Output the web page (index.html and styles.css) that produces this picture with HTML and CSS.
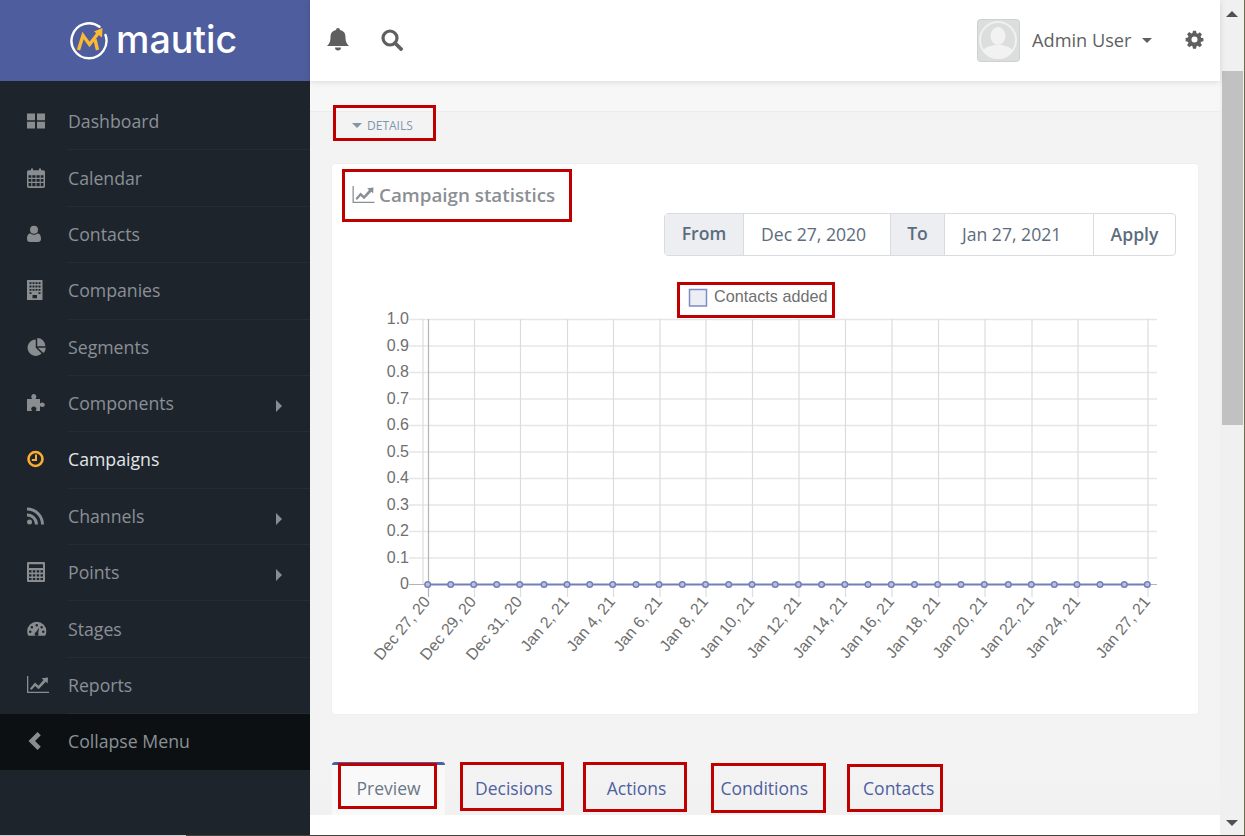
FILE: index.html
```html
<!DOCTYPE html>
<html lang="en">
<head>
    <meta charset="UTF-8">
    <meta name="viewport" content="width=device-width, initial-scale=1.0">
    <title>Mautic</title>
    <link rel="stylesheet" href="styles.css">
</head>
<body>
<div class="app">
    <aside class="sidebar">
        <div class="brand">
            <svg class="brand-mark" width="40" height="40" viewBox="0 0 40 40">
                <path d="M30.500 5.800A17.500 17.500 0 1 0 36.500 14" fill="none" stroke="#fff" stroke-width="2.400" stroke-linecap="round"/>
                <path d="M9.500 29L14 14.500L20.500 23.500L29 12.500" fill="none" stroke="#fdb933" stroke-width="3.400"/>
                <path d="M25 10.500L33.500 7L33 16.500Z" fill="#fdb933"/>
                <path d="M26 18.500L28.500 29" fill="none" stroke="#fdb933" stroke-width="3.400"/>
            </svg>
            <span class="brand-name">mautic</span>
        </div>
        <ul class="menu">
            <li class="menu-item">
                <svg class="menu-icon" viewBox="0 0 18 18"><path d="M0 1.500h8v6.700H0zM10 1.500h8v6.700h-8zM0 9.800h8v6.700H0zM10 9.800h8v6.700h-8z"/></svg>
                <span>Dashboard</span>
            </li>
            <li class="menu-item">
                <svg class="menu-icon icon-tall" viewBox="0 0 18 18" preserveAspectRatio="none"><path fill-rule="evenodd" d="M1.500 2H4V0.500h2V2h6V0.500h2V2h2.500A1.500 1.500 0 0 1 18 3.500v13a1.500 1.500 0 0 1-1.500 1.500h-15A1.500 1.500 0 0 1 0 16.500v-13A1.500 1.500 0 0 1 1.500 2zM1.500 6.500v2.300h2.800V6.500zM5.300 6.500v2.300h3.200V6.500zM9.500 6.500v2.300h3.200V6.500zM13.700 6.500v2.300h2.800V6.500zM1.500 9.800v2.600h2.800V9.800zM5.300 9.800v2.600h3.200V9.800zM9.500 9.800v2.600h3.200V9.800zM13.700 9.800v2.600h2.800V9.800zM1.500 13.400v3h2.800v-3zM5.300 13.400v3h3.200v-3zM9.500 13.400v3h3.200v-3zM13.700 13.400v3h2.800v-3z"/></svg>
                <span>Calendar</span>
            </li>
            <li class="menu-item">
                <svg class="menu-icon" viewBox="0 0 18 18"><circle cx="7" cy="4.800" r="4"/><path d="M0 14c0-4 1.500-5.500 3.500-5.500 1 .8 2.200 1.200 3.500 1.200s2.500-.4 3.500-1.200c2 0 3.500 1.500 3.500 5.500 0 2-1.200 3-3 3H3c-1.800 0-3-1-3-3z"/></svg>
                <span>Contacts</span>
            </li>
            <li class="menu-item">
                <svg class="menu-icon icon-tall" viewBox="0 0 18 18" preserveAspectRatio="none"><path fill-rule="evenodd" d="M0 0h15.500v18H0zM2.500 2v1.700h2V2zM5.500 2v1.700h2V2zM8.500 2v1.700h2V2zM11.500 2v1.700h2V2zM2.500 5v1.700h2V5zM5.500 5v1.700h2V5zM8.500 5v1.700h2V5zM11.500 5v1.700h2V5zM2.500 8v1.700h2V8zM5.500 8v1.700h2V8zM8.500 8v1.700h2V8zM11.500 8v1.700h2V8zM2.500 11v1.700h2V11zM11.500 11v1.700h2V11zM5.500 16.500h4.500v-3H5.500z"/></svg>
                <span>Companies</span>
            </li>
            <li class="menu-item">
                <svg class="menu-icon icon-round" viewBox="0 0 18 18"><path d="M8 1.500v8.200l5.800 5.800A8.200 8.200 0 1 1 8 1.500z"/><path d="M9.500 0a8.200 8.200 0 0 1 8.200 8.200H9.500z"/><path d="M10 9.700h8a8 8 0 0 1-2.300 5.400z"/></svg>
                <span>Segments</span>
            </li>
            <li class="menu-item">
                <svg class="menu-icon" viewBox="0 0 18 18"><path d="M0 5h5.300c-.6-.8-1-1.300-1-2.300C4.300 1.200 5.300 0 6.800 0s2.500 1.200 2.500 2.700c0 1-.4 1.500-1 2.300H13v4.500c.8-.6 1.300-1 2.200-1 1.500 0 2.600 1 2.600 2.300s-1.100 2.300-2.600 2.300c-.9 0-1.400-.4-2.200-1V17H8.500c.5-.8.900-1.300.9-2.200 0-1.300-1.100-2.300-2.600-2.300s-2.600 1-2.600 2.300c0 .9.400 1.400.9 2.200H0z"/></svg>
                <span>Components</span>
                <i class="menu-arrow"></i>
            </li>
            <li class="menu-item is-active">
                <svg class="menu-icon" viewBox="0 0 18 18"><circle cx="8.500" cy="9" r="7" fill="none" stroke="#fbad2f" stroke-width="2.600"/><path d="M9 4.500v5.500H4.800" fill="none" stroke="#fbad2f" stroke-width="2"/></svg>
                <span>Campaigns</span>
            </li>
            <li class="menu-item">
                <svg class="menu-icon" viewBox="0 0 18 18"><circle cx="2.500" cy="15" r="2.500"/><path d="M0 6.500a11 11 0 0 1 11 11H8a8 8 0 0 0-8-8zM0 .5a17 17 0 0 1 17 17h-3A14 14 0 0 0 0 3.500z"/></svg>
                <span>Channels</span>
                <i class="menu-arrow"></i>
            </li>
            <li class="menu-item">
                <svg class="menu-icon icon-tall" viewBox="0 0 18 18" preserveAspectRatio="none"><path fill-rule="evenodd" d="M1 0h16a1 1 0 0 1 1 1v16a1 1 0 0 1-1 1H1a1 1 0 0 1-1-1V1a1 1 0 0 1 1-1zM2 2v3.500h14V2zM2 7.500v2h2.500v-2zM5.800 7.500v2h2.500v-2zM9.700 7.500v2h2.500v-2zM13.500 7.500v2H16v-2zM2 11v2h2.500v-2zM5.800 11v2h2.500v-2zM9.700 11v2h2.500v-2zM13.500 11v2H16v-2zM2 14.300v2h2.500v-2zM5.800 14.300v2h2.500v-2zM9.700 14.300v2h2.500v-2zM13.500 14.300v2H16v-2z"/></svg>
                <span>Points</span>
                <i class="menu-arrow"></i>
            </li>
            <li class="menu-item">
                <svg class="menu-icon icon-round" viewBox="0 0 20 18"><path fill-rule="evenodd" d="M10 1.500a9.800 9.800 0 0 1 9.800 9.800c0 1.700-.4 3.300-1.200 4.700H1.400A9.800 9.800 0 0 1 .2 11.300 9.800 9.800 0 0 1 10 1.500zM10 3.800a1.300 1.300 0 1 0 0 2.600 1.300 1.300 0 0 0 0-2.600zM5 6a1.300 1.300 0 1 0 0 2.600A1.300 1.300 0 0 0 5 6zM15 6a1.300 1.300 0 1 0 0 2.600A1.300 1.300 0 0 0 15 6zM3.300 10.500a1.300 1.300 0 1 0 0 2.600 1.300 1.300 0 0 0 0-2.600zM16.700 10.500a1.300 1.300 0 1 0 0 2.600 1.300 1.300 0 0 0 0-2.600zM12.500 7.500l-3.200 4.700a2 2 0 1 0 2.200.8z"/></svg>
                <span>Stages</span>
            </li>
            <li class="menu-item menu-item-wide">
                <svg class="menu-icon" viewBox="0 0 22 18"><path d="M0 0h1.300v15.800H22V17H0z"/><path d="M3 12.500l5-6 3.500 3.300 5-5.800-1.900-1.700L21 1.500l-.3 6-1.900-1.700-7.200 7.500-3.500-3.300-3.600 4z"/></svg>
                <span>Reports</span>
            </li>
            <li class="menu-item menu-collapse">
                <svg class="menu-icon" viewBox="0 0 18 18"><path d="M10.500 0l3.300 3.300-5.700 5.700 5.700 5.700-3.300 3.300-9-9z"/></svg>
                <span>Collapse Menu</span>
            </li>
        </ul>
    </aside>

    <div class="main">
        <header class="topbar">
            <svg class="top-icon" width="22" height="23" viewBox="0 0 22 23"><path d="M11 0a2 2 0 0 1 2 2c4 .8 5.500 3.500 5.500 7.500 0 4 1 6 3.500 8.500H0c2.500-2.500 3.500-4.500 3.500-8.500S5 2.800 9 2a2 2 0 0 1 2-2zM8 19.500h6a3 3 0 0 1-6 0z"/></svg>
            <svg class="top-icon top-search" width="22" height="22" viewBox="0 0 22 22"><circle cx="9" cy="9" r="7" fill="none" stroke="#5f5f5f" stroke-width="3.200"/><path d="M14 14l6 6" stroke="#5f5f5f" stroke-width="3.800" stroke-linecap="round"/></svg>
            <div class="top-user">
                <svg class="avatar" width="43" height="43" viewBox="0 0 43 43">
                    <rect x=".5" y=".5" width="42" height="42" rx="3" fill="#dcdddd" stroke="#cfd0d0"/>
                    <circle cx="21" cy="21" r="18" fill="none" stroke="#f0f0f0" stroke-width="2"/>
                    <ellipse cx="21" cy="17" rx="7.500" ry="9" fill="#f2f2f2"/>
                    <path d="M6 32c3-5 9-5 11-6h8c2 1 8 1 11 6a18 18 0 0 1-30 0z" fill="#f2f2f2"/>
                </svg>
                <span class="user-name">Admin User</span>
                <i class="user-caret"></i>
                <svg class="gear" width="19" height="19" viewBox="0 0 20 20"><path fill="#5f5f5f" fill-rule="evenodd" d="M8.200 0h3.600l.5 2.700 1.500.6 2.300-1.600 2.500 2.500-1.600 2.300.6 1.500 2.700.5v3.600l-2.700.5-.6 1.500 1.600 2.300-2.500 2.500-2.300-1.600-1.500.6-.5 2.700H8.200l-.5-2.700-1.500-.6-2.300 1.600-2.500-2.500 1.600-2.300-.6-1.500-2.700-.5V8.200l2.700-.5.6-1.500-1.600-2.300 2.500-2.500 2.300 1.600 1.500-.6zM10 6.500a3.500 3.500 0 1 0 0 7 3.500 3.500 0 0 0 0-7z" transform="scale(.91) translate(1 1)"/></svg>
            </div>
        </header>

        <div class="content">
            <div class="details-bar">
                <a class="details-toggle"><i class="details-caret"></i>DETAILS</a>
            </div>

            <section class="card">
                <h3 class="card-title">
                    <svg width="23" height="18" viewBox="0 0 22 18"><path d="M0 0h1.300v15.800H22V17H0z"/><path d="M3 12.500l5-6 3.500 3.300 5-5.800-1.900-1.700L21 1.500l-.3 6-1.900-1.700-7.200 7.500-3.500-3.300-3.600 4z"/></svg>
                    Campaign statistics
                </h3>
                <div class="date-row">
                    <div class="date-group">
                        <span class="date-addon date-from">From</span>
                        <span class="date-input date-input-from">Dec 27, 2020</span>
                        <span class="date-addon date-to">To</span>
                        <span class="date-input date-input-to">Jan 27, 2021</span>
                        <span class="date-apply">Apply</span>
                    </div>
                </div>
                <svg class="chart" width="865" height="415" viewBox="332 270 865 415">
                    <rect x="689.500" y="289.500" width="17" height="16.500" fill="#eceef6" stroke="#7f8cc0" stroke-width="1.500"/>
                    <text class="legend-label" x="714" y="301.500">Contacts added</text>

                    <g class="grid-h">
                        <path d="M409 319.500H1157M409 346H1157M409 372.500H1157M409 399H1157M409 425.500H1157M409 452H1157M409 478.500H1157M409 505H1157M409 531.500H1157M409 558H1157"/>
                    </g>
                    <g class="grid-v">
                        <path d="M423 319V584M474.500 319V597M520.500 319V597M567.500 319V597M613.500 319V597M660 319V597M706 319V597M752.500 319V597M799 319V597M845.500 319V597M892 319V597M938.500 319V597M985 319V597M1032 319V597M1078 319V597M1148 319V597"/>
                    </g>
                    <path class="axis" d="M428.500 319V597M409 584.500H1157"/>
                    <path class="series-line" d="M427.700 584.500H1147.300"/>
                    <g class="series-points">
                        <circle cx="427.700" cy="584.500" r="2.800"/><circle cx="450.700" cy="584.500" r="2.800"/><circle cx="473.700" cy="584.500" r="2.800"/><circle cx="496.700" cy="584.500" r="2.800"/><circle cx="519.700" cy="584.500" r="2.800"/><circle cx="544" cy="584.500" r="2.800"/><circle cx="567" cy="584.500" r="2.800"/><circle cx="589.700" cy="584.500" r="2.800"/><circle cx="612.700" cy="584.500" r="2.800"/><circle cx="636" cy="584.500" r="2.800"/><circle cx="659" cy="584.500" r="2.800"/><circle cx="682.300" cy="584.500" r="2.800"/><circle cx="705.500" cy="584.500" r="2.800"/><circle cx="728.700" cy="584.500" r="2.800"/><circle cx="752" cy="584.500" r="2.800"/><circle cx="775.200" cy="584.500" r="2.800"/><circle cx="798.400" cy="584.500" r="2.800"/><circle cx="821.600" cy="584.500" r="2.800"/><circle cx="844.800" cy="584.500" r="2.800"/><circle cx="868" cy="584.500" r="2.800"/><circle cx="891.300" cy="584.500" r="2.800"/><circle cx="914.500" cy="584.500" r="2.800"/><circle cx="937.700" cy="584.500" r="2.800"/><circle cx="961" cy="584.500" r="2.800"/><circle cx="984.300" cy="584.500" r="2.800"/><circle cx="1008.300" cy="584.500" r="2.800"/><circle cx="1031.300" cy="584.500" r="2.800"/><circle cx="1054.300" cy="584.500" r="2.800"/><circle cx="1077" cy="584.500" r="2.800"/><circle cx="1100" cy="584.500" r="2.800"/><circle cx="1124.300" cy="584.500" r="2.800"/><circle cx="1147.300" cy="584.500" r="2.800"/>
                    </g>
                    <g class="y-labels">
                        <text x="409" y="324">1.0</text>
                        <text x="409" y="351">0.9</text>
                        <text x="409" y="377">0.8</text>
                        <text x="409" y="404">0.7</text>
                        <text x="409" y="430">0.6</text>
                        <text x="409" y="457">0.5</text>
                        <text x="409" y="483">0.4</text>
                        <text x="409" y="510">0.3</text>
                        <text x="409" y="536">0.2</text>
                        <text x="409" y="563">0.1</text>
                        <text x="409" y="589">0</text>
                    </g>
                    <g class="x-labels">
                        <text transform="translate(431 602) rotate(-50)">Dec 27, 20</text>
                        <text transform="translate(477 602) rotate(-50)">Dec 29, 20</text>
                        <text transform="translate(523 602) rotate(-50)">Dec 31, 20</text>
                        <text transform="translate(570 602) rotate(-50)">Jan 2, 21</text>
                        <text transform="translate(616 602) rotate(-50)">Jan 4, 21</text>
                        <text transform="translate(663 602) rotate(-50)">Jan 6, 21</text>
                        <text transform="translate(709 602) rotate(-50)">Jan 8, 21</text>
                        <text transform="translate(755 602) rotate(-50)">Jan 10, 21</text>
                        <text transform="translate(802 602) rotate(-50)">Jan 12, 21</text>
                        <text transform="translate(848 602) rotate(-50)">Jan 14, 21</text>
                        <text transform="translate(895 602) rotate(-50)">Jan 16, 21</text>
                        <text transform="translate(941 602) rotate(-50)">Jan 18, 21</text>
                        <text transform="translate(988 602) rotate(-50)">Jan 20, 21</text>
                        <text transform="translate(1035 602) rotate(-50)">Jan 22, 21</text>
                        <text transform="translate(1081 602) rotate(-50)">Jan 24, 21</text>
                        <text transform="translate(1151 602) rotate(-50)">Jan 27, 21</text>
                    </g>
                </svg>
            </section>

            <nav class="tabs">
                <a class="tab tab-active">Preview</a>
                <a class="tab tab-decisions">Decisions</a>
                <a class="tab tab-actions">Actions</a>
                <a class="tab tab-conditions">Conditions</a>
                <a class="tab tab-contacts">Contacts</a>
            </nav>
        </div>
        <div class="content-end"></div>
    </div>

    <div class="scrollbar">
        <i class="scroll-up"></i>
        <div class="scroll-track"><div class="scroll-thumb"></div></div>
        <i class="scroll-down"></i>
    </div>
</div>
<div class="window-edge-right"></div>
<div class="window-edge"></div>

<!-- red review boxes drawn over the shot -->
<div class="mark mark-details"></div>
<div class="mark mark-stats"></div>
<div class="mark mark-legend"></div>
<div class="mark mark-preview"></div>
<div class="mark mark-decisions"></div>
<div class="mark mark-actions"></div>
<div class="mark mark-conditions"></div>
<div class="mark mark-contacts"></div>
</body>
</html>
```

FILE: styles.css
```css
* {
    box-sizing: border-box;
}
html, body {
    margin: 0;
    height: 836px;
    overflow: hidden;
}
body {
    position: relative;
    font-family: "Open Sans", Arial, sans-serif;
    background-color: #f3f3f3;
}
.app {
    display: flex;
    width: 1244px;
    height: 835px;
}

/* sidebar */
.sidebar {
    width: 310px;
    flex-shrink: 0;
    background-color: #1e242c;
}
.brand {
    display: flex;
    align-items: center;
    height: 81px;
    padding-left: 69px;
    background-color: #4e5d9d;
}
.brand-name {
    margin-left: 7px;
    margin-top: -2px;
    font-family: "Inter", sans-serif;
    font-size: 37.600px;
    font-weight: 500;
    color: #fff;
}
.menu {
    list-style: none;
    margin: 0;
    padding: 13.100px 0 0;
}
.menu-item {
    position: relative;
    display: flex;
    align-items: center;
    height: 56.36px;
    padding-left: 27px;
    padding-bottom: 2px;
    font-size: 17.700px;
    color: #8a9096;
}
.menu-item::after {
    content: "";
    position: absolute;
    left: 67px;
    right: 0;
    bottom: 0;
    height: 1px;
    background-color: #262c34;
}
.menu-item span {
    margin-left: 23px;
}
.menu-icon {
    width: 18px;
    height: 18px;
    fill: #8a8d90;
    flex-shrink: 0;
}
.icon-tall {
    height: 20px;
}
.icon-round {
    width: 19.500px;
}
.icon-round + span {
    margin-left: 21.500px;
}
.menu-item-wide .menu-icon {
    width: 22px;
}
.menu-item-wide span {
    margin-left: 19px;
}
.menu-arrow {
    position: absolute;
    left: 276px;
    top: 24px;
    border-left: 6px solid #8a8d90;
    border-top: 6px solid transparent;
    border-bottom: 6px solid transparent;
}
.is-active {
    color: #e3e6e8;
}
.menu-collapse {
    background-color: #0c1013;
}
.menu-collapse::after {
    display: none;
}

/* top bar */
.main {
    flex: 1;
    min-width: 0;
    display: flex;
    flex-direction: column;
}
.topbar {
    position: relative;
    display: flex;
    align-items: center;
    height: 81px;
    padding: 0 16px 0 17px;
    background-color: #fff;
    box-shadow: 0 1px 6px rgba(0, 0, 0, 0.12);
}
.top-icon {
    fill: #5f5f5f;
    margin-top: -2px;
}
.top-search {
    margin-left: 32px;
}
.top-user {
    display: flex;
    align-items: center;
    margin-left: auto;
}
.user-name {
    width: 99px;
    margin-left: 12px;
    margin-top: -2px;
    font-size: 18.200px;
    white-space: nowrap;
    color: #5f5f5f;
}
.user-caret {
    margin-left: 11px;
    border-top: 5px solid #5f5f5f;
    border-left: 5.500px solid transparent;
    border-right: 5.500px solid transparent;
}
.gear {
    margin-left: 33px;
    margin-top: -2px;
}

/* page content */
.content {
    flex: 1;
    min-height: 0;
    background-color: #f3f3f3;
}
.details-bar {
    height: 31px;
    background-color: #f7f7f7;
    border-bottom: 1px solid #ececec;
}
.details-toggle {
    display: flex;
    align-items: center;
    position: relative;
    top: 36px;
    width: 100px;
    margin-left: 42px;
    font-size: 12px;
    color: #7f97ad;
}
.details-caret {
    margin-right: 5px;
    border-top: 5px solid #8195a8;
    border-left: 5px solid transparent;
    border-right: 5px solid transparent;
}
.card {
    width: 868px;
    height: 552px;
    margin: 51px 0 0 21px;
    background-color: #fff;
    border: 1px solid #efefef;
    border-radius: 4px;
}
.card-title {
    display: flex;
    align-items: center;
    gap: 4px;
    margin: 0;
    padding: 18px 0 0 20px;
    font-size: 18.800px;
    font-weight: 600;
    line-height: 26px;
    color: #8b8f94;
}
.card-title svg {
    fill: #8b8f94;
}
.date-row {
    display: flex;
    justify-content: flex-end;
    margin-top: 5px;
    padding-right: 22px;
}
.date-group {
    display: flex;
    width: 512px;
    height: 43px;
    font-size: 17.600px;
    line-height: 40px;
    border: 1px solid #d9dbde;
    border-radius: 4px;
}
.date-addon {
    font-weight: 600;
    line-height: 38px;
    text-align: center;
    color: #5d6c7c;
    background-color: #eceef1;
}
.date-from {
    width: 79px;
    border-right: 1px solid #d9dbde;
}
.date-to {
    width: 55px;
    border-left: 1px solid #d9dbde;
    border-right: 1px solid #d9dbde;
}
.date-input {
    padding-left: 17px;
    color: #5d6c7c;
    width: 146px;
}
.date-input-to {
    width: 148px;
}
.date-apply {
    flex: 1;
    font-weight: 600;
    text-align: center;
    color: #5d6c7c;
    border-left: 1px solid #d9dbde;
}
.chart {
    display: block;
    margin-top: 14px;
    font-family: "Liberation Sans", Arial, sans-serif;
}
.legend-label {
    font-size: 16.200px;
    fill: #6f6f6f;
}
.grid-h path, .grid-v path {
    fill: none;
    stroke: #e6e6e6;
    stroke-width: 1.500;
}
.grid-v path {
    stroke: #dcdcdc;
    stroke-width: 1.200;
}
.axis {
    fill: none;
    stroke: #b4b4b4;
    stroke-width: 1.200;
}
.series-line {
    stroke: #7380b8;
    stroke-width: 2;
}
.series-points circle {
    fill: #b9c0dd;
    stroke: #7380b8;
    stroke-width: 1.500;
}
.y-labels text {
    font-size: 16px;
    fill: #6f6f6f;
    text-anchor: end;
}
.x-labels text {
    font-size: 16px;
    fill: #6f6f6f;
    text-anchor: end;
}

/* tabs */
.tabs {
    display: flex;
    align-items: flex-end;
    height: 53px;
    margin-top: 47px;
    padding-left: 22px;
    background: linear-gradient(#f3f3f3, #f1f1f1);
}
.tab {
    height: 53px;
    padding-top: 13px;
    font-size: 17.500px;
    line-height: 26px;
    color: #4f5f9f;
}
.tab-active {
    width: 113px;
    text-align: center;
    color: #6a7886;
    background-color: #f9f9f9;
    border-top: 3px solid #4e5d9d;
    border-radius: 3px 3px 0 0;
    padding-top: 10px;
}
.tab-decisions {
    margin-left: 30px;
}
.tab-actions {
    margin-left: 54px;
}
.tab-conditions {
    margin-left: 54px;
}
.tab-contacts {
    margin-left: 55px;
}
.content-end {
    height: 20px;
    background-color: #fff;
}

/* scrollbar */
.scrollbar {
    display: flex;
    flex-direction: column;
    align-items: center;
    width: 24px;
    flex-shrink: 0;
    background-color: #f0f0f0;
}
.scroll-track {
    flex: 1;
    width: 100%;
    padding: 71px 1px 0 2px;
}
.scroll-up, .scroll-down {
    position: absolute;
    left: 1226px;
    border-left: 6px solid transparent;
    border-right: 6px solid transparent;
}
.scroll-up {
    top: 11px;
    border-bottom: 6px solid #505050;
}
.scroll-down {
    top: 820px;
    border-top: 6px solid #505050;
}
.scroll-thumb {
    height: 354px;
    background-color: #c1c1c1;
}
.window-edge-right {
    position: absolute;
    top: 0;
    right: 0;
    bottom: 0;
    width: 1px;
    background-color: #6d6a4e;
}
.window-edge {
    position: absolute;
    left: 0;
    right: 0;
    bottom: 0;
    height: 1px;
    background: linear-gradient(90deg, #c9cdd2 186px, #45423c 186px);
}

/* red review boxes */
.mark {
    position: absolute;
    border: 3px solid #bf0000;
}
.mark-details { left: 333px; top: 105px; width: 103px; height: 36px; }
.mark-stats { left: 342px; top: 169px; width: 230px; height: 53px; }
.mark-legend { left: 677px; top: 282px; width: 158px; height: 36px; }
.mark-preview { left: 338px; top: 763px; width: 99px; height: 46px; }
.mark-decisions { left: 460px; top: 762px; width: 104px; height: 49px; }
.mark-actions { left: 583px; top: 762px; width: 104px; height: 50px; }
.mark-conditions { left: 711px; top: 763px; width: 115px; height: 50px; }
.mark-contacts { left: 847px; top: 764px; width: 96px; height: 48px; }
```
